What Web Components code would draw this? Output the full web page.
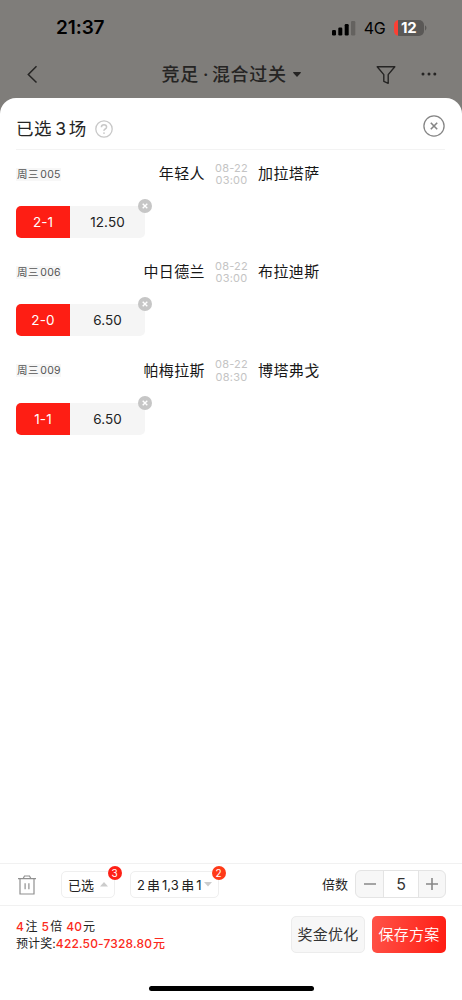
<!DOCTYPE html>
<html lang="zh-CN">
<head>
<meta charset="utf-8">
<title>竞足 · 混合过关</title>
<style>
html,body{margin:0;height:100%}
body{font-family:Inter,"Noto Sans CJK SC",sans-serif;color:#252525;background:#7f7d7a;overflow:hidden}
</style>
</head>
<body>
<bet-app></bet-app>
<script>
const define = (name, html, after) => {
  const t = document.createElement('template');
  t.innerHTML = '<style>*{box-sizing:border-box}svg{display:block;flex:none}</style>' + html;
  customElements.define(name, class extends HTMLElement {
    constructor() {
      super();
      this.attachShadow({mode: 'open'}).append(t.content.cloneNode(true));
      if (after) after(this, this.shadowRoot);
    }
  });
};

define('status-bar', `
<style>
:host{display:flex;height:52px;padding:4px 35px 0 56px;align-items:center;color:#000}
.time{font-size:19px;font-weight:600;letter-spacing:-.1px;flex:1;line-height:24px}
.net{font-size:16px;margin:0 8px 0 8px;line-height:20px;letter-spacing:-.3px}
.bat{width:30.5px;height:16px;border-radius:5px;background:linear-gradient(90deg,#fb4034 4px,#5a5856 4px);color:#fff;font-size:15px;font-weight:700;line-height:16px;text-align:center;letter-spacing:-.3px;margin-top:-1px}
</style>
<span class="time">21:37</span>
<svg width="24" height="16" viewBox="0 0 24 16"><rect x="0" y="10" width="4" height="5.5" rx="1.2"/><rect x="6.3" y="7.5" width="4" height="8" rx="1.2"/><rect x="12.7" y="4" width="4" height="11.5" rx="1.2"/><rect x="19" y="1" width="4.3" height="14.5" rx="1.2" fill="#64625f"/></svg>
<span class="net">4G</span><span class="bat">12</span>
<svg width="3" height="8" viewBox="0 0 3 8"><path d="M1 1.3Q4 4 1 6.7Z" fill="#5a5856"/></svg>
`);

define('nav-bar', `
<style>
:host{display:flex;height:46px;padding:0 24px 0 26px;align-items:center;color:#252423}
.t{flex:1;display:flex;align-items:center;padding-left:121.5px;font-size:18px;font-weight:500;letter-spacing:.7px;line-height:26px;white-space:nowrap}
.t svg{margin-left:5px}
.dot{margin:0 3.5px 0 4px;letter-spacing:0}
.r{position:relative;top:-1px}
</style>
<svg class="r" width="14" height="20" viewBox="0 0 14 20" fill="none" stroke="#252423" stroke-width="1.5"><path d="M10.5 2.3L2.3 10.5l8.2 8"/></svg>
<span class="t"><span>竞足</span><span class="dot">·</span><span>混合过关</span><svg class="r" width="10" height="7" viewBox="0 0 10 7"><path d="M1.5 1H8.5Q9.3 1.4 8.7 2L5.5 5.5Q5 6 4.5 5.5L1.3 2Q.7 1.4 1.5 1Z" fill="#252423"/></svg></span>
<svg width="22" height="20" viewBox="0 0 22 20" fill="none" stroke="#252423" stroke-width="1.4" stroke-linejoin="round"><path d="M2.2 1.7H19.8L13.2 9.6V18.3L8.8 16.3V9.6Z"/></svg>
<svg class="r" style="margin-left:23px" width="18" height="6" viewBox="0 0 18 6" fill="#252423"><circle cx="3" cy="3" r="1.5"/><circle cx="9" cy="3" r="1.5"/><circle cx="14.8" cy="3" r="1.5"/></svg>
`);

define('sheet-header', `
<style>
:host{display:flex;height:52px;margin:0 17px 0 16px;padding-top:10px;align-items:center;border-bottom:1.5px solid #f3f3f3;font-size:17.5px;line-height:26px;color:#252525}
.n{margin:0 2.5px 0 3.5px;font-size:17.5px}
.h{flex:1;margin-left:8.5px}
.x{margin:-5px 0 0}
</style>
<span style="letter-spacing:.4px">已选</span><span class="n">3</span><span>场</span>
<span class="h"><svg width="18" height="18" viewBox="0 0 18 18" fill="none" stroke="#c8c8c8" stroke-width="1.3"><circle cx="9" cy="9" r="8.2"/><path d="M6.4 7.2Q6.4 4.7 9 4.7T11.6 7Q11.6 8.2 10.2 9T9 10.9" stroke-width="1.5"/><circle cx="9" cy="13.1" r=".9" fill="#c8c8c8" stroke="none"/></svg></span>
<svg class="x" width="22" height="22" viewBox="0 0 22 22" fill="none" stroke="#858585"><circle cx="11" cy="11" r="10.1" stroke-width="1.3"/><path d="M7.8 7.8l6.4 6.4M14.2 7.8l-6.4 6.4" stroke-width="1.6"/></svg>
`);

define('odds-chip', `
<style>
:host{display:flex;position:relative;width:129px;height:32px;border-radius:5px;background:#f5f5f5;font-size:13.5px;line-height:32px;text-align:center}
.s{width:54px;background:#fe1e14;color:#fff;border-radius:5px 0 0 5px;letter-spacing:.1px}
.o{flex:1;color:#222;letter-spacing:.1px}
svg{position:absolute;right:-7px;top:-7px}
</style>
<span class="s"><slot name="score"></slot></span><span class="o"><slot name="odds"></slot></span>
<svg width="14" height="14" viewBox="0 0 14 14"><circle cx="7" cy="7" r="7" fill="#c6c6c6"/><path d="M4.7 4.7l4.6 4.6M9.3 4.7L4.7 9.3" stroke="#fff" stroke-width="1.4"/></svg>
`);

define('match-row', `
<style>
:host{display:block;height:98.3px;padding:11px 16px 0}
.m{display:grid;grid-template-columns:45px 144px 53px 1fr;align-items:center;height:26px;color:#171717;font-size:15px;letter-spacing:.4px;margin-bottom:19px}
.id{background:#f7f7f7;font-size:10.5px;line-height:13px;height:13px;color:#555;display:flex;gap:1.5px;padding-left:1px;white-space:nowrap}
.id span{letter-spacing:.4px}
.id slot{display:block;letter-spacing:.2px}
.home{text-align:right}
.d{text-align:center;font-size:11px;line-height:12.5px;color:#c4c4c4;letter-spacing:.25px}
.home,.away{line-height:22px}
</style>
<div class="m"><span class="id"><span>周三</span><slot name="id"></slot></span><span class="home"><slot name="home"></slot></span><span class="d"><slot name="date"></slot><br><slot name="time"></slot></span><span class="away"><slot name="away"></slot></span></div>
<slot></slot>
`);

define('select-pill', `
<style>
:host{display:flex;position:relative;height:27px;border:1px solid #efefef;border-radius:5px;background:#fff;align-items:center;font-size:13px;line-height:20px;color:#222;white-space:nowrap}
.b{position:absolute;right:-7.5px;top:-6px;width:14px;height:14px;border-radius:50%;background:var(--badge,#fe2116);color:#fff;font-size:10px;line-height:14px;text-align:center}
</style>
<slot></slot><span class="b"><slot name="badge"></slot></span>
`);

define('num-stepper', `
<style>
:host{display:grid;grid-template-columns:27px 36px 1fr;width:91px;height:28px;border:1px solid #e4e4e4;border-radius:6px;background:#f7f7f7;overflow:hidden;position:relative;top:-1px}
span{background:#fff;border:solid #e4e4e4;border-width:0 1px;font-size:16px;line-height:27px;text-align:center;color:#333}
svg{place-self:center}
</style>
<svg width="14" height="14" viewBox="0 0 14 14" stroke="#888" stroke-width="1.6"><path d="M1 7H13"/></svg>
<span><slot></slot></span>
<svg width="14" height="14" viewBox="0 0 14 14" stroke="#888" stroke-width="1.6"><path d="M1 7H13M7 1V13"/></svg>
`);

define('app-button', `
<style>
:host{display:block;width:74px;height:37px;border-radius:5px;border:1px solid #ececec;background:#f7f7f7;color:#333;font-size:15px;line-height:36px;text-align:center;letter-spacing:.2px;white-space:nowrap}
:host([primary]){border:0;line-height:38px;color:#fff;background:linear-gradient(100deg,#ff5348,#ff1c12);font-weight:350}
</style><slot></slot>
`);

define('tool-row', `
<style>
:host{display:flex;height:43px;border:solid #f1f1f1;border-width:1px 0;padding:0 16px 0 18px;align-items:center}
.first{width:54px;margin-left:25px;padding-left:6px}
.second{width:89px;margin-left:15px;padding-left:6px;--badge:#ff3a18}
.lab{margin-left:auto;margin-right:7px;font-size:13px;line-height:20px;position:relative;top:-1px}
i{font-style:normal}
</style>
<svg width="18" height="20" viewBox="0 0 18 20" fill="none" stroke="#909090" stroke-width="1.2"><path d="M0 3.6H18M5.3 3.3L6.5 1H11.5L12.7 3.3M2 3.8V19H16V3.8M7.1 8.3V14.2M10.9 8.3V14.2"/></svg>
<select-pill class="first"><i>已选</i><svg style="margin-left:6px" width="8" height="5" viewBox="0 0 8 5"><path d="M4 0L8 4.5H0Z" fill="#ccc"/></svg><i slot="badge">3</i></select-pill>
<select-pill class="second"><i>2</i><i style="margin:0 2px">串</i><i>1,3</i><i style="margin:0 2px 0 2.5px">串</i><i>1</i><svg style="margin-left:2.5px" width="8" height="5" viewBox="0 0 8 5"><path d="M0 0H8L4 4.5Z" fill="#ccc"/></svg><i slot="badge">2</i></select-pill>
<span class="lab">倍数</span><num-stepper>5</num-stepper>
`);

define('pay-row', `
<style>
:host{display:flex;height:47px;padding:10px 16px 0;align-items:flex-start}
.sum{flex:1;font-size:12px;line-height:17px;padding-top:1.5px;color:#222;white-space:nowrap}
b{color:#fb2a20;font-weight:500;letter-spacing:.15px}
.l{display:flex}
app-button+app-button{margin-left:7px}
</style>
<div class="sum"><div class="l"><b>4</b><span style="margin:0 4px 0 1.5px">注</span><b>5</b><span style="margin:0 4px 0 1px">倍</span><b>40</b><span style="margin-left:1px">元</span></div>
<div class="l"><span style="letter-spacing:.1px">预计奖:</span><b>422.50-7328.80</b><b style="margin-left:1px">元</b></div></div>
<app-button>奖金优化</app-button><app-button primary>保存方案</app-button>
`);

define('bet-app', `
<style>
:host{display:flex;flex-direction:column;width:462px;height:1000px;background:#7f7d7a}
main{flex:1;display:flex;flex-direction:column;background:#fff;border-radius:16px 16px 0 0}
.list{flex:1}
.home{height:5px;width:165px;border-radius:3px;background:#000;margin:33px 0 9px 148.5px}
</style>
<status-bar></status-bar><nav-bar></nav-bar>
<main><sheet-header></sheet-header><div class="list"></div><tool-row></tool-row><pay-row></pay-row><div class="home"></div></main>
`, (host, root) => {
  const rows = [['005','年轻人','03:00','加拉塔萨','2-1','12.50'],['006','中日德兰','03:00','布拉迪斯','2-0','6.50'],['009','帕梅拉斯','08:30','博塔弗戈','1-1','6.50']];
  root.querySelector('.list').innerHTML = rows.map(([id,h,t,a,s,o]) => `<match-row><span slot="id">${id}</span><span slot="home">${h}</span><span slot="date">08-22</span><span slot="time">${t}</span><span slot="away">${a}</span><odds-chip><span slot="score">${s}</span><span slot="odds">${o}</span></odds-chip></match-row>`).join('');
});
</script>
</body>
</html>
